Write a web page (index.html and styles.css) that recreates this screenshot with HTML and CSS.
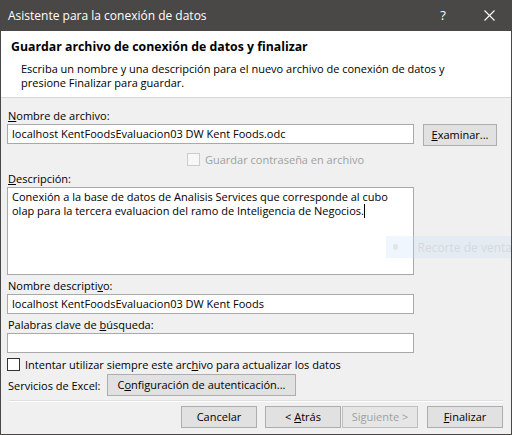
FILE: index.html
```html
<!DOCTYPE html>
<html lang="es">
<head>
<meta charset="utf-8">
<title>Asistente para la conexión de datos</title>
<link rel="stylesheet" href="styles.css">
</head>
<body>
<div class="window">
  <div class="titlebar">
    <span class="title">Asistente para la conexión de datos</span>
    <span class="help">?</span>
    <span class="close"><svg width="11" height="11" viewBox="0 0 11 11"><path d="M0.5 0.5L10.5 10.5M10.5 0.5L0.5 10.5" stroke="#ffffff" stroke-width="1.1" fill="none"/></svg></span>
  </div>
  <div class="header">
    <h1 class="heading">Guardar archivo de conexión de datos y finalizar</h1>
    <p class="intro">Escriba un nombre y una descripción para el nuevo archivo de conexión de datos y<br>presione Finalizar para guardar.</p>
  </div>
  <div class="content">
    <div class="label"><u>N</u>ombre de archivo:</div>
    <div class="file-row">
      <div class="field">localhost KentFoodsEvaluacion03 DW Kent Foods.odc</div>
      <button class="btn browse"><u>E</u>xaminar...</button>
    </div>
    <div class="check-row pwd disabled"><span class="checkbox"></span><span>Guardar contraseña en archivo</span></div>
    <div class="label desc-label"><u>D</u>escripción:</div>
    <div class="field area">Conexión a la base de datos de Analisis Services que corresponde al cubo<br>olap para la tercera evaluacion del ramo de Inteligencia de Negocios.<span class="caret"></span></div>
    <div class="label gap3">Nombre descripti<u>v</u>o:</div>
    <div class="field">localhost KentFoodsEvaluacion03 DW Kent Foods</div>
    <div class="label gap3">Palabras clave de <u>b</u>úsqueda:</div>
    <div class="field"></div>
    <div class="check-row always"><span class="checkbox on"></span><span>Intentar utilizar siempre este arc<u>h</u>ivo para actualizar los datos</span></div>
    <div class="excel-row">
      <span class="excel-label">Servicios de Excel:</span>
      <button class="btn auth">C<u>o</u>nfiguración de autenticación...</button>
    </div>
  </div>
  <div class="footer">
    <button class="btn nav">Cancelar</button>
    <button class="btn nav back">&lt; <u>A</u>trás</button>
    <button class="btn nav next" disabled>Siguiente &gt;</button>
    <button class="btn nav finish"><u>F</u>inalizar</button>
  </div>
  <div class="snip-overlay"><span class="snip-dot"></span><span class="snip-text">Recorte de ventana</span></div>
</div>
</body>
</html>
```
FILE: styles.css
```css
* { box-sizing: border-box; }
html, body { margin: 0; padding: 0; background: #ffffff; }
body {
  font-family: "Open Sans", "Noto Sans", sans-serif;
  font-size: 11px;
  color: #000;
}
u { text-decoration: underline; text-underline-offset: 1px; text-decoration-thickness: 1px; }
.window {
  position: relative;
  width: 512px;
  height: 435px;
  background: #f0f0f0;
  border: 1px solid #4a4846;
  border-top: 0;
  overflow: hidden;
  display: flex;
  flex-direction: column;
}
.titlebar {
  height: 31px;
  background: #4a4846;
  color: #ffffff;
  display: flex;
  align-items: center;
  padding-left: 8px;
  font-size: 12px;
  flex: none;
  margin: 0 -1px;
}
.title { flex: 1; }
.help { width: 46px; text-align: center; font-size: 13px; margin-top: -1px; }
.close { width: 46px; display: flex; justify-content: center; align-items: center; }
.header {
  height: 67px;
  background: #ffffff;
  border-bottom: 1px solid #d8d8d8;
  padding: 8px 0 0 10px;
  flex: none;
}
.heading {
  margin: 0;
  font-size: 12.3px;
  font-weight: 700;
  line-height: 16px;
}
.intro {
  margin: 7px 0 0 10px;
  line-height: 14px;
}
.content {
  padding: 10px 0 0 6px;
  display: flex;
  flex-direction: column;
  flex: none;
}
.label { line-height: 16px; padding-left: 1px; }
.gap3 { margin-top: 3px; }
.desc-label { margin-top: 5px; }
.file-row { display: flex; align-items: flex-start; }
.field {
  width: 407px;
  height: 20px;
  background: #ffffff;
  border: 1px solid #a9a9a9;
  padding: 0 4px;
  line-height: 18px;
  white-space: nowrap;
}
.area {
  height: 88px;
  line-height: 14px;
  padding: 2px 4px;
  white-space: normal;
}
.caret {
  display: inline-block;
  width: 1px;
  height: 14px;
  background: #000;
  vertical-align: -3px;
}
.btn {
  font: inherit;
  color: #000;
  background: #e1e1e1;
  border: 1px solid #adadad;
  padding: 0;
  height: 22px;
  line-height: 20px;
}
.browse { width: 74px; margin-left: 9px; }
.check-row {
  display: flex;
  align-items: center;
  height: 13px;
  line-height: 13px;
}
.checkbox {
  width: 13px;
  height: 13px;
  border: 1px solid #333333;
  background: #ffffff;
  margin-right: 5px;
  flex: none;
}
.pwd { margin: 7px 0 0 180px; }
.disabled { color: #a0a0a0; }
.disabled .checkbox { border-color: #cccccc; background: #f7f7f7; }
.always { margin-top: 5px; }
.excel-row { display: flex; align-items: center; margin-top: 3px; }
.excel-label { width: 100px; padding-left: 1px; }
.auth { width: 189px; }
.footer {
  margin: 4px 8px 0 8px;
  border-top: 1px solid #dfdfdf;
  box-shadow: inset 0 1px 0 #ffffff;
  padding-top: 5px;
  display: flex;
  justify-content: flex-end;
}
.nav { width: 76px; }
.back { margin-left: 8px; }
.next { margin-left: 1px; color: #a0a0a0; border-color: #bfbfbf; background: #e6e6e6; }
.finish { margin-left: 9px; }
.snip-overlay {
  position: absolute;
  left: 385px;
  top: 236px;
  width: 140px;
  height: 22px;
  background: rgba(200, 222, 248, 0.28);
  display: flex;
  align-items: center;
  white-space: nowrap;
  font-size: 12px;
}
.snip-dot {
  width: 6px;
  height: 6px;
  border-radius: 50%;
  background: #e2e4e6;
  margin-left: 7px;
  margin-right: 20px;
}
.snip-text { color: #d5d9de; }
```
